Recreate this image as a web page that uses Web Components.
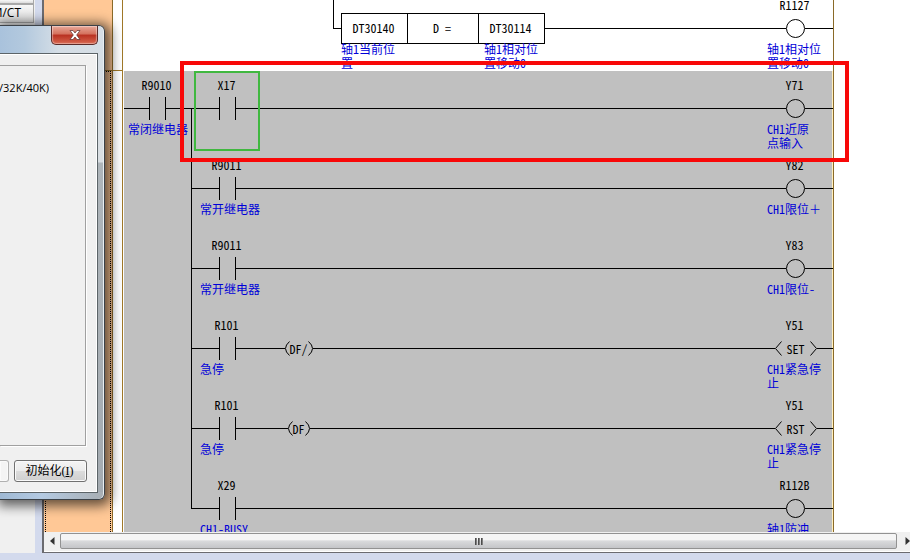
<!DOCTYPE html>
<html lang="zh-CN">
<head>
<meta charset="utf-8">
<title>Ladder editor</title>
<style>
  html, body { height: 100%; margin: 0; }
  body {
    overflow: hidden;
    font: 12px/14px "Noto Sans CJK SC", "Liberation Sans", sans-serif;
    color: #000;
  }
  .full { font-feature-settings: normal; }
</style>
</head>
<body>
<ladder-app>
  <tool-strip></tool-strip>
  <ladder-editor>
    <ladder-rung class="first">
      <ladder-corner></ladder-corner>
      <ladder-compare>
        <span slot="a">DT30140</span><span slot="op">D =</span><span slot="b">DT30114</span>
        <span slot="note-a">轴1当前位<br>置</span>
        <span slot="note-b">轴1相对位<br>置移动0</span>
      </ladder-compare>
      <ladder-wire></ladder-wire>
      <ladder-coil label="R1127">轴1相对位<br>置移动0</ladder-coil>
    </ladder-rung>
    <ladder-network>
      <ladder-contact slot="input" class="lead" label="R9010">常闭继电器</ladder-contact>
      <ladder-rung>
        <ladder-contact label="X17" cursor></ladder-contact>
        <ladder-wire></ladder-wire>
        <ladder-coil label="Y71">CH1近原<br>点输入</ladder-coil>
      </ladder-rung>
      <ladder-rung>
        <ladder-contact label="R9011">常开继电器</ladder-contact>
        <ladder-wire></ladder-wire>
        <ladder-coil label="Y82">CH1限位<span class="full">＋</span></ladder-coil>
      </ladder-rung>
      <ladder-rung>
        <ladder-contact label="R9011">常开继电器</ladder-contact>
        <ladder-wire></ladder-wire>
        <ladder-coil label="Y83">CH1限位-</ladder-coil>
      </ladder-rung>
      <ladder-rung>
        <ladder-contact label="R101">急停</ladder-contact>
        <ladder-edge op="DF/"></ladder-edge>
        <ladder-wire></ladder-wire>
        <ladder-coil label="Y51" op="SET">CH1紧急停<br>止</ladder-coil>
      </ladder-rung>
      <ladder-rung>
        <ladder-contact label="R101">急停</ladder-contact>
        <ladder-edge op="DF"></ladder-edge>
        <ladder-wire></ladder-wire>
        <ladder-coil label="Y51" op="RST">CH1紧急停<br>止</ladder-coil>
      </ladder-rung>
      <ladder-rung>
        <ladder-contact label="X29">CH1-BUSY</ladder-contact>
        <ladder-wire></ladder-wire>
        <ladder-coil label="R112B">轴1防冲</ladder-coil>
      </ladder-rung>
    </ladder-network>
  </ladder-editor>
  <settings-dialog slot="dialog"></settings-dialog>
</ladder-app>

<script>
// shared by every symbol: label on top, symbol row in the middle, note below
const cellStyle = `
  :host {
    display: grid;
    grid-template-rows: var(--head, 26px) 23px 31px;
    grid-template-columns: 100%;
    position: relative;
    flex: none;
    font-feature-settings: "hwid";
  }
  .label { align-self: end; padding: 0 2px 5px 0; text-align: center; white-space: nowrap; }
  .row { display: flex; align-items: center; }
  .wire { flex: 1; height: 1px; background: #000; }
  .note { padding: 2px 0 0 var(--inset, 8px); color: #0000d8; white-space: nowrap; }
`;

class LadderElement extends HTMLElement {
  constructor() {
    super();
    this.attachShadow({ mode: "open" });
  }

  connectedCallback() {
    this.shadowRoot.innerHTML = this.render();
  }
}

class LadderApp extends LadderElement {
  render() {
    return `
      <style>
        :host {
          display: grid;
          grid-template: minmax(0, 1fr) 7px / 42px minmax(0, 1fr);
          position: relative;
          height: 100%;
          overflow: hidden;
          background: #d3daed;
        }
        slot[name="dialog"]::slotted(*) { position: absolute; top: 25px; left: 0; }
      </style>
      <slot></slot>
      <slot name="dialog"></slot>
    `;
  }
}

class ToolStrip extends LadderElement {
  render() {
    return `
      <style>
        :host { display: flex; flex-direction: column; align-items: flex-start; margin-right: 7px; background: #f0f0f0; }
        button {
          display: flex;
          justify-content: flex-end;
          width: 34px;
          height: 19px;
          margin: 0;
          padding: 0 12px 0 0;
          overflow: hidden;
          border: 1px solid #a8a8a8;
          border-left: 0;
          background: linear-gradient(#f7f7f7, #dcdcdc);
          font: 12px/16px "Open Sans", sans-serif;
          color: #000;
        }
        .cut { height: 4px; border-top: 0; }
      </style>
      <button class="cut" aria-label="tool"></button>
      <button>M/CT</button>
    `;
  }
}

class LadderEditor extends LadderElement {
  render() {
    return `
      <style>
        :host {
          display: flex;
          flex-direction: column;
          min-width: 0;
          border: solid #6b6b70;
          border-width: 0 0 1px 2px;
          background: #fff;
        }
        .view { display: flex; flex: 1; min-height: 0; overflow: hidden; }
        .gutter { display: flex; flex-direction: column; width: 68px; border-right: 1px solid #8a6a28; background: #ffc896; }
        .step { flex: 1; margin: 0 1px; border: 1px dotted #000; border-bottom: 0; }
        .step.top { flex: 0 0 70px; margin: 0; border: 0; border-bottom: 1px solid #a07828; }
        .rail { width: 9px; border-right: 1px solid #a07828; }
        .rail::before { content: ""; display: block; height: 70px; border-bottom: 1px solid #a07828; }
        .ladder { position: relative; flex: 1; min-width: 0; margin: 0 76px 0 1px; border-right: 1px solid #8a6a28; }
        .mark { position: absolute; top: 61px; left: 56px; right: -16px; height: 93px; border: 4px solid #f80808; }
        .bar { display: flex; height: 18px; padding-bottom: 1px; border-bottom: 1px solid #fff; background: #f0f0f0; }
        .bar button { width: 16px; padding: 0; border: 0; background: none; }
        .bar button:last-child { width: 13px; overflow: hidden; }
        .bar svg { display: block; margin: auto; }
        .bar button:last-child svg { margin-right: 0; }
        .thumb {
          flex: 1;
          display: flex;
          align-items: center;
          justify-content: center;
          gap: 1px;
          box-sizing: border-box;
          height: 16px;
          margin-top: 1px;
          border: 1px solid #929292;
          border-radius: 2px;
          background: linear-gradient(#f5f5f5 0 40%, #d9dadc 50%, #c4c5c8);
        }
        .thumb i { width: 2px; height: 7px; background: linear-gradient(90deg, #333, #999); }
      </style>
      <div class="view">
        <div class="gutter"><div class="step top"></div><div class="step"></div></div>
        <div class="rail"></div>
        <div class="ladder">
          <slot></slot>
          <div class="mark"></div>
        </div>
      </div>
      <div class="bar">
        <button aria-label="left"><svg width="5" height="8"><path d="M4.5 0v8L0 4z" fill="#333"/></svg></button>
        <div class="thumb"><i></i><i></i><i></i></div>
        <button aria-label="right"><svg width="5" height="8"><path d="M.5 0v8L5 4z" fill="#333"/></svg></button>
      </div>
    `;
  }
}

class LadderRung extends LadderElement {
  render() {
    return `
      <style>
        :host { display: flex; height: 80px; }
        :host(.first) { --head: 17px; height: 71px; }
      </style>
      <slot></slot>
    `;
  }
}

class LadderNetwork extends LadderElement {
  render() {
    return `
      <style>
        :host { display: flex; background: #c0c0c0; box-shadow: inset -1px 0 #fff0c0; }
        .bus { width: 1px; margin: 37px 0 42px; background: #000; }
        .rungs { flex: 1; min-width: 0; }
      </style>
      <slot name="input"></slot>
      <div class="bus"></div>
      <div class="rungs"><slot></slot></div>
    `;
  }
}

class LadderContact extends LadderElement {
  render() {
    const cursor = this.hasAttribute("cursor") ? `<div class="cursor"></div>` : "";
    return `
      <style>
        ${cellStyle}
        :host { width: 71px; }
        :host(.lead) { --inset: 4px; width: 67px; }
        .plates { width: 15px; height: 23px; border: solid #000; border-width: 0 1px; }
        .cursor { position: absolute; inset: 0 3px 0 2px; border: 2px solid #40b840; }
      </style>
      <div class="label">${this.getAttribute("label")}</div>
      <div class="row"><div class="wire"></div><div class="plates"></div><div class="wire"></div></div>
      <div class="note"><slot></slot></div>
      ${cursor}
    `;
  }
}

class LadderCoil extends LadderElement {
  render() {
    const op = this.getAttribute("op");
    const symbol = op
      ? `<svg width="7" height="15"><path d="M6.5 .5L.5 7.5l6 7"/></svg>
         <span class="op">${op}</span>
         <svg width="7" height="15"><path d="M.5 .5l6 7-6 7"/></svg>`
      : `<svg width="19" height="19"><circle cx="9.5" cy="9.5" r="9"/></svg>`;
    return `
      <style>
        ${cellStyle}
        :host { --inset: 9px; width: 75px; }
        svg { fill: none; stroke: #000; }
        .op { width: 28px; text-align: center; }
      </style>
      <div class="label">${this.getAttribute("label")}</div>
      <div class="row"><div class="wire"></div>${symbol}<div class="wire"></div></div>
      <div class="note"><slot></slot></div>
    `;
  }
}

class LadderEdge extends LadderElement {
  render() {
    return `
      <style>
        ${cellStyle}
        :host { width: 71px; }
        .row { grid-row: 2; }
        svg { fill: none; stroke: #000; }
      </style>
      <div class="row">
        <div class="wire"></div>
        <svg width="5" height="15"><path d="M4.5 .5Q-3.5 7.5 4.5 14.5"/></svg>
        <span>${this.getAttribute("op")}</span>
        <svg width="5" height="15"><path d="M.5 .5Q8.5 7.5 .5 14.5"/></svg>
        <div class="wire"></div>
      </div>
    `;
  }
}

class LadderWire extends LadderElement {
  render() {
    return `
      <style>
        :host { flex: 1; height: 1px; margin-top: calc(var(--head, 26px) + 11px); background: #000; }
      </style>
    `;
  }
}

// wire that comes down from the rung above and turns right
class LadderCorner extends LadderElement {
  render() {
    return `
      <style>
        :host {
          width: 7px;
          height: calc(var(--head, 26px) + 11px);
          margin-left: 209px;
          border: solid #000;
          border-width: 0 0 1px 1px;
        }
      </style>
    `;
  }
}

class LadderCompare extends LadderElement {
  render() {
    return `
      <style>
        ${cellStyle}
        :host { width: 204px; }
        .row { grid-row: 2; }
        .box, .notes { display: grid; grid-template-columns: 65px 71px 66px; }
        .box { flex: 1; box-sizing: border-box; height: 31px; border: 1px solid #000; }
        .box div { display: flex; align-items: center; justify-content: center; padding: 0 2px 2px 0; white-space: pre; }
        .box div + div { border-left: 1px solid #000; }
        .notes { grid-row: 3; }
        .notes .note { --inset: 0px; }
        .notes .note:last-child { grid-column: 3; --inset: 7px; }
      </style>
      <div class="row">
        <div class="box">
          <div><slot name="a"></slot></div><div><slot name="op"></slot></div><div><slot name="b"></slot></div>
        </div>
      </div>
      <div class="notes">
        <div class="note"><slot name="note-a"></slot></div>
        <div class="note"><slot name="note-b"></slot></div>
      </div>
    `;
  }
}

class SettingsDialog extends LadderElement {
  render() {
    return `
      <style>
        :host {
          display: flex;
          flex-direction: column;
          box-sizing: border-box;
          width: 105px;
          height: 475px;
          padding: 0 6px 6px 0;
          border: 1px solid #3c4248;
          border-left: 0;
          border-radius: 0 6px 6px 0;
          background:
            linear-gradient(90deg, #9fb9d4, #b4cae2 40%, #a8aeb3) bottom / 100% 7px no-repeat,
            linear-gradient(#d5dee6, #d9dee2 136px, #aeb5ba 137px, #a4abb1);
          box-shadow: inset -1px 0 #e8eef2, 2px 2px 12px 4px rgba(0, 0, 0, .6);
        }
        header {
          display: flex;
          justify-content: flex-end;
          align-items: flex-start;
          height: 27px;
          background: linear-gradient(90deg, #a9c2dc, #b3c9de 25%, #d5dee6 60%, transparent);
        }
        .close {
          display: flex;
          align-items: center;
          justify-content: center;
          width: 47px;
          height: 19px;
          padding: 0;
          border: 1px solid #5a2a28;
          border-top: 0;
          border-radius: 0 0 5px 5px;
          background: linear-gradient(#e8a898, #d4705c 45%, #b83020 50%, #d86850);
          box-shadow: inset 0 0 1px 1px rgba(255, 255, 255, .4);
        }
        main {
          display: flex;
          flex-direction: column;
          flex: 1;
          border: 1px solid #5c6468;
          border-left: 0;
          background: #f0f0f0;
          box-shadow: inset -1px 1px #fff, inset 0 -1px #fff;
        }
        .group { height: 379px; margin: 11px 11px 0 0; border: 1px solid #a0a0a0; border-left: 0; box-shadow: 1px 1px #fff; }
        .range {
          display: flex;
          justify-content: flex-end;
          width: 49px;
          padding-top: 15px;
          overflow: hidden;
          font: 11px/14px "Open Sans", sans-serif;
        }
        footer { display: flex; gap: 5px; padding-top: 14px; }
        footer button {
          box-sizing: border-box;
          width: 73px;
          height: 22px;
          padding: 0 2px 0 0;
          border: 1px solid #707070;
          border-radius: 3px;
          background: linear-gradient(#f4f4f4, #ebebeb 50%, #dcdcdc 50%, #cfcfcf);
          box-shadow: inset 0 0 0 1px #fafafa;
          font: 12px/18px "Liberation Serif", "Noto Sans CJK SC", serif;
          color: #000;
        }
        footer .off { width: 9px; border-color: #b0b0b0; border-left: 0; border-radius: 0 3px 3px 0; background: #f4f4f4; }
      </style>
      <header>
        <button class="close" aria-label="close">
          <svg width="12" height="10" viewBox="0 0 12 10">
            <path d="M1 .5h3l2 2.500 2-2.500h3L7.700 5 11 9.500H8L6 7 4 9.500H1L4.300 5z" fill="#fff" stroke="#5a3030" stroke-width=".7"/>
          </svg>
        </button>
      </header>
      <main>
        <div class="group"><div class="range">K/32K/40K)</div></div>
        <footer><button class="off" aria-label="off" disabled></button><button>初始化(<u>I</u>)</button></footer>
      </main>
    `;
  }
}

customElements.define("ladder-app", LadderApp);
customElements.define("tool-strip", ToolStrip);
customElements.define("ladder-editor", LadderEditor);
customElements.define("ladder-rung", LadderRung);
customElements.define("ladder-network", LadderNetwork);
customElements.define("ladder-contact", LadderContact);
customElements.define("ladder-coil", LadderCoil);
customElements.define("ladder-edge", LadderEdge);
customElements.define("ladder-wire", LadderWire);
customElements.define("ladder-corner", LadderCorner);
customElements.define("ladder-compare", LadderCompare);
customElements.define("settings-dialog", SettingsDialog);
</script>
</body>
</html>
